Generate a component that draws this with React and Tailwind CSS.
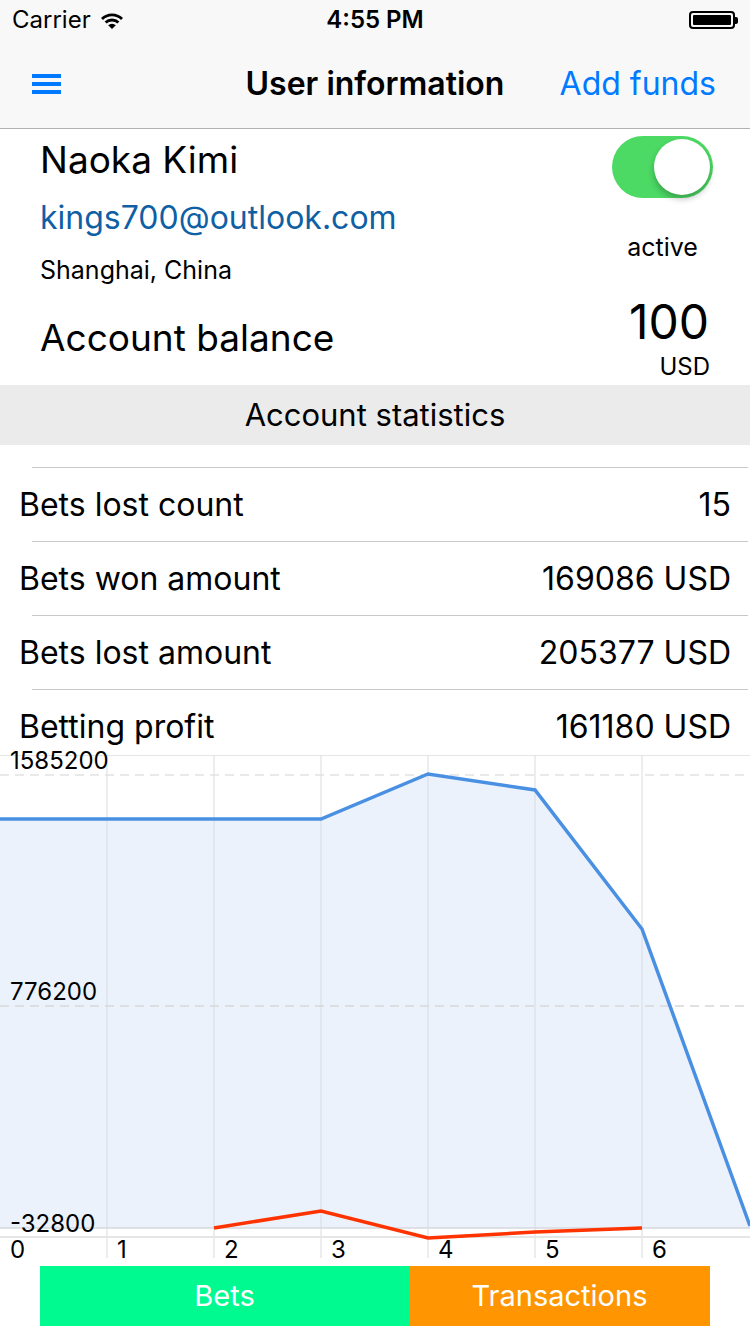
import React from "react";

const FONT = { fontFamily: "Inter, Roboto, 'Liberation Sans', sans-serif" };

const STATS = [
  { label: "Bets lost count", value: "15" },
  { label: "Bets won amount", value: "169086 USD" },
  { label: "Bets lost amount", value: "205377 USD" },
  { label: "Betting profit", value: "161180 USD" },
];

const GRID_X = [107, 214, 321, 428, 535, 642];
const BLUE = [
  [0, 64],
  [107, 64],
  [214, 64],
  [321, 64],
  [428, 19],
  [535, 35],
  [642, 174],
  [750, 471],
];
const RED = [
  [214, 473],
  [321, 456],
  [428, 483],
  [535, 477],
  [642, 473],
];

const pts = (list) => list.map(([x, y]) => `${x},${y}`).join(" ");

function StatusBar() {
  return (
    <div className="relative flex h-[40px] items-center bg-[#f8f8f8] px-[12px] text-[24px] text-black">
      <span className="leading-none">Carrier</span>
      <svg viewBox="0 0 26 20" className="ml-[8px] h-[20px] w-[26px]">
        <path d="M13 19 L9.2 15.2 A5.4 5.4 0 0 1 16.8 15.2 Z" fill="#000" />
        <path d="M5.6 11.6 A10.5 10.5 0 0 1 20.4 11.6 L18.4 13.6 A7.7 7.7 0 0 0 7.6 13.6 Z" fill="#000" />
        <path d="M2 8 A15.6 15.6 0 0 1 24 8 L22 10 A12.8 12.8 0 0 0 4 10 Z" fill="#000" />
      </svg>
      <span className="absolute left-1/2 -translate-x-1/2 font-semibold leading-none">4:55 PM</span>
      <div className="ml-auto flex items-center">
        <div className="h-[18px] w-[46px] rounded-[4px] border-[2px] border-black p-[2px]">
          <div className="h-full w-full rounded-[1px] bg-black" />
        </div>
        <div className="h-[7px] w-[3px] rounded-r-[2px] bg-black" />
      </div>
    </div>
  );
}

function NavBar() {
  return (
    <div className="relative flex h-[89px] items-center border-b border-[#b2b2b2] bg-[#f8f8f8] px-[32px]">
      <div className="flex w-[30px] flex-col gap-[4px]">
        <div className="h-[4px] w-[29px] bg-[#007aff]" />
        <div className="h-[4px] w-[29px] bg-[#007aff]" />
        <div className="h-[4px] w-[29px] bg-[#007aff]" />
      </div>
      <span className="absolute left-1/2 -translate-x-1/2 text-[32px] font-semibold text-black">
        User information
      </span>
      <span className="ml-auto mr-[2px] text-[32px] text-[#007aff]">Add funds</span>
    </div>
  );
}

function Toggle() {
  return (
    <div className="flex h-[62px] w-[101px] items-center justify-end rounded-full bg-[#4cd964] p-[3px]">
      <div className="h-[56px] w-[56px] rounded-full bg-white shadow-[0_4px_6px_rgba(0,0,0,0.25)]" />
    </div>
  );
}

function Profile() {
  return (
    <div className="flex h-[256px] bg-white">
      <div className="flex flex-1 flex-col pl-[40px] pt-[8px]">
        <div className="h-[46px] text-[37px] leading-[46px] text-black">Naoka Kimi</div>
        <div className="mt-[14px] h-[42px] text-[32px] leading-[42px] text-[#0f5fa5]">
          kings700@outlook.com
        </div>
        <div className="mt-[17px] h-[28px] text-[25px] leading-[28px] text-black">Shanghai, China</div>
        <div className="mt-[31px] h-[46px] text-[37px] leading-[46px] text-black">Account balance</div>
      </div>
      <div className="flex w-[140px] flex-col items-end pr-[37px] pt-[7px]">
        <Toggle />
        <div className="mt-[35px] h-[28px] w-[101px] text-center text-[25px] leading-[28px] text-black">
          active
        </div>
        <div className="mr-[4px] mt-[33px] h-[56px] text-[48px] leading-[56px] text-black">100</div>
        <div className="mr-[3px] mt-[3px] h-[28px] text-[24px] leading-[28px] text-black">USD</div>
      </div>
    </div>
  );
}

function Stats() {
  return (
    <div className="bg-white">
      <div className="flex h-[60px] items-center justify-center bg-[#ebebeb] text-[31px] text-black">
        Account statistics
      </div>
      <div className="h-[22px]" />
      {STATS.map((s, i) => (
        <div key={s.label}>
          <div className="ml-[32px] mr-[2px] h-px bg-[#c8c7cc]" />
          <div
            className={`flex justify-between px-[19px] text-[32px] text-black ${
              i === STATS.length - 1 ? "h-[65px] leading-[74px]" : "h-[73px] leading-[73px]"
            }`}
          >
            <span>{s.label}</span>
            <span>{s.value}</span>
          </div>
        </div>
      ))}
    </div>
  );
}

function Chart() {
  return (
    <div className="h-[507px] bg-white">
      <svg viewBox="0 0 750 507" className="block h-[507px] w-[750px] overflow-visible" style={FONT}>
        <polygon points={`${pts(BLUE)} 750,473 0,473`} fill="#ebf2fc" />
        <line x1="0" y1="0.5" x2="750" y2="0.5" stroke="#e6e6e6" strokeWidth="1" />
        {GRID_X.map((x) => (
          <line key={x} x1={x} y1="0" x2={x} y2="503" stroke="#d8dbe0" strokeWidth="1" />
        ))}
        <line x1="0" y1="20" x2="750" y2="20" stroke="#e2e2e2" strokeWidth="1.5" strokeDasharray="9 6" />
        <line x1="0" y1="251" x2="750" y2="251" stroke="#d8d8d8" strokeWidth="1.5" strokeDasharray="9 6" />
        <line x1="0" y1="473" x2="750" y2="473" stroke="#d6d9de" strokeWidth="1.5" />
        <line x1="0" y1="482" x2="750" y2="482" stroke="#e6e6e6" strokeWidth="2" />
        <polyline points={pts(BLUE)} fill="none" stroke="#4a90e2" strokeWidth="3.5" strokeLinejoin="miter" />
        <polyline points={pts(RED)} fill="none" stroke="#ff3300" strokeWidth="3.5" />
        <text x="10" y="14" fontSize="24" fill="#000">1585200</text>
        <text x="10" y="245" fontSize="24" fill="#000">776200</text>
        <text x="10" y="477" fontSize="24" fill="#000">-32800</text>
        {[0, 1, 2, 3, 4, 5, 6].map((n) => (
          <text key={n} x={n * 107 + 10} y="503" fontSize="24" fill="#000">
            {n}
          </text>
        ))}
      </svg>
    </div>
  );
}

export default function App() {
  return (
    <div className="h-[1334px] w-[750px] overflow-hidden bg-white" style={FONT}>
      <StatusBar />
      <NavBar />
      <Profile />
      <Stats />
      <Chart />
      <div className="ml-[40px] mt-[4px] flex h-[60px] text-[29px] text-white">
        <div className="flex w-[369px] items-center justify-center bg-[#00fa90]">Bets</div>
        <div className="flex w-[301px] items-center justify-center bg-[#ff9500]">Transactions</div>
      </div>
    </div>
  );
}
